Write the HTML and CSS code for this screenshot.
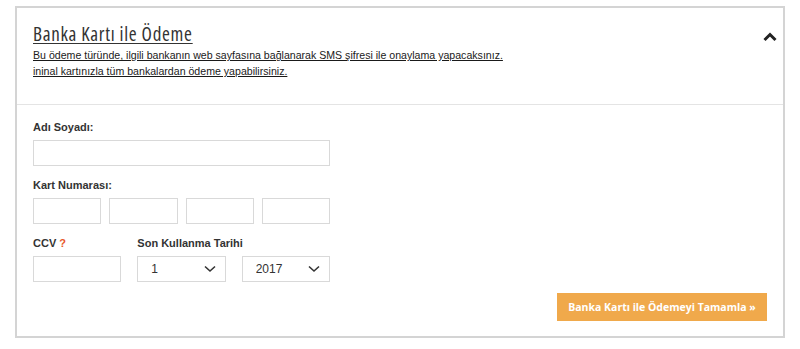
FILE: index.html
```html
<!DOCTYPE html>
<html lang="tr">
<head>
    <meta charset="UTF-8">
    <meta name="viewport" content="width=device-width, initial-scale=1.0">
    <title>Banka Kartı ile Ödeme</title>
    <link rel="stylesheet" href="styles.css">
</head>
<body>
    <div class="payment-box">
        <div class="payment-head">
            <div class="head-text">
                <h2>Banka Kartı ile Ödeme</h2>
                <p>Bu ödeme türünde, ilgili bankanın web sayfasına bağlanarak SMS şifresi ile onaylama yapacaksınız.<br>ininal kartınızla tüm bankalardan ödeme yapabilirsiniz.</p>
            </div>
            <svg class="toggle" width="14" height="10" viewBox="0 0 14 10">
                <polyline points="1.5,8 7,2.5 12.5,8" fill="none" stroke="#222" stroke-width="3"/>
            </svg>
        </div>

        <form class="payment-form">
            <div class="field">
                <label for="name">Adı Soyadı:</label>
                <input type="text" id="name" class="wide">
            </div>

            <div class="field">
                <label>Kart Numarası:</label>
                <div class="card-row">
                    <input type="text" maxlength="4">
                    <input type="text" maxlength="4">
                    <input type="text" maxlength="4">
                    <input type="text" maxlength="4">
                </div>
            </div>

            <div class="field expiry-grid">
                <label for="ccv">CCV <span class="help">?</span></label>
                <label class="span-2">Son Kullanma Tarihi</label>
                <input type="text" id="ccv" maxlength="3">
                <div class="select-wrap">
                    <select>
                        <option>1</option>
                        <option>2</option>
                        <option>3</option>
                    </select>
                    <svg class="caret" width="12" height="8" viewBox="0 0 12 8">
                        <polyline points="1,1.5 6,6 11,1.5" fill="none" stroke="#333" stroke-width="1.6"/>
                    </svg>
                </div>
                <div class="select-wrap">
                    <select>
                        <option>2017</option>
                        <option>2018</option>
                        <option>2019</option>
                    </select>
                    <svg class="caret" width="12" height="8" viewBox="0 0 12 8">
                        <polyline points="1,1.5 6,6 11,1.5" fill="none" stroke="#333" stroke-width="1.6"/>
                    </svg>
                </div>
            </div>

            <div class="actions">
                <button type="submit">Banka Kartı ile Ödemeyi Tamamla »</button>
            </div>
        </form>
    </div>
</body>
</html>
```

FILE: styles.css
```css
* {
    margin: 0;
    padding: 0;
    box-sizing: border-box;
}

body {
    background: #fff;
    padding: 6px 15px;
    font-family: "Liberation Sans", Arial, sans-serif;
    color: #222;
}

.payment-box {
    width: 770px;
    height: 332px;
    border: 2px solid #d4d4d4;
    background: #fff;
}

/* Header */
.payment-head {
    display: flex;
    justify-content: space-between;
    align-items: flex-start;
    padding: 14px 6px 25px 16px;
    border-bottom: 1px solid #e4e4e4;
}

.payment-head h2 {
    font-family: "Open Sans", sans-serif;
    font-weight: 400;
    font-size: 19px;
    font-stretch: 87.5%;
    letter-spacing: 0.7px;
    line-height: 24px;
    color: #333;
    text-decoration: underline;
    text-underline-offset: 2px;
}

.payment-head p {
    margin-top: 1px;
    font-size: 10.6px;
    line-height: 16px;
    color: #1a1a1a;
    text-decoration: underline;
}

.toggle {
    margin-top: 10px;
}

/* Form */
.payment-form {
    padding: 15px 16px 15px 16px;
}

.field {
    margin-bottom: 12px;
}

.field.expiry-grid {
    margin-bottom: 11px;
}

.field label {
    display: block;
    font-size: 11px;
    font-weight: bold;
    line-height: 14px;
    color: #333;
    margin-bottom: 6px;
}

.help {
    color: #e8572b;
}

input,
select {
    height: 26px;
    border: 1px solid #d9d9d9;
    background: #fff;
    font-family: "Liberation Sans", Arial, sans-serif;
    font-size: 12px;
    color: #333;
    outline: none;
}

.wide {
    width: 297px;
}

.card-row {
    display: grid;
    grid-template-columns: repeat(4, 1fr);
    gap: 8px;
    width: 297px;
}

.card-row input {
    width: 100%;
}

.expiry-grid {
    display: grid;
    grid-template-columns: repeat(3, 1fr);
    column-gap: 16px;
    width: 297px;
}

.span-2 {
    grid-column: span 2;
}

.expiry-grid input {
    width: 100%;
}

.select-wrap {
    position: relative;
}

.select-wrap select {
    width: 100%;
    appearance: none;
    -webkit-appearance: none;
    padding-left: 13px;
    border-radius: 0;
}

.caret {
    position: absolute;
    right: 10px;
    top: 9px;
    pointer-events: none;
}

.actions {
    display: flex;
    justify-content: flex-end;
}

button {
    width: 210px;
    height: 28px;
    border: none;
    background: #f0a94b;
    color: #fff;
    font-family: "Open Sans", sans-serif;
    font-weight: bold;
    font-size: 10.5px;
    cursor: pointer;
}
```
